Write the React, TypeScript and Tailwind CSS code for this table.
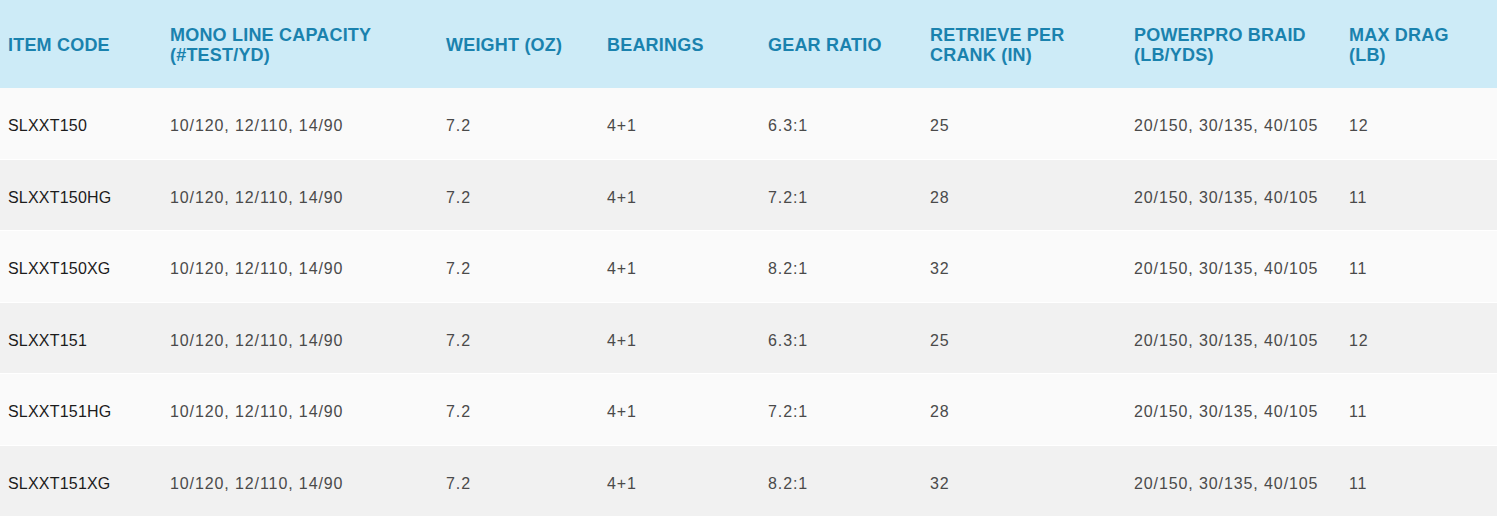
const headers = [
  ['ITEM CODE'],
  ['MONO LINE CAPACITY', '(#TEST/YD)'],
  ['WEIGHT (OZ)'],
  ['BEARINGS'],
  ['GEAR RATIO'],
  ['RETRIEVE PER', 'CRANK (IN)'],
  ['POWERPRO BRAID', '(LB/YDS)'],
  ['MAX DRAG', '(LB)'],
];

const rows = [
  ['SLXXT150', '6.3:1', '25', '12'],
  ['SLXXT150HG', '7.2:1', '28', '11'],
  ['SLXXT150XG', '8.2:1', '32', '11'],
  ['SLXXT151', '6.3:1', '25', '12'],
  ['SLXXT151HG', '7.2:1', '28', '11'],
  ['SLXXT151XG', '8.2:1', '32', '11'],
];

const cols = 'grid grid-cols-[162px_276px_161px_161px_162px_204px_215px_1fr] pl-[8px]';

export default function App() {
  return (
    <div className="w-[1500px] h-[517px] bg-white overflow-hidden" style={{ fontFamily: '"Liberation Sans", Arial, sans-serif' }}>
      <div className="w-[1497px]">
        <div className={`${cols} h-[88px] items-center bg-[#cdebf7] text-[#1a82ae] font-bold text-[18px] leading-[20px] tracking-[0.2px]`}>
          {headers.map((h, i) => (
            <div key={i} className="mt-[1px]">
              {h.map(line => <div key={line}>{line}</div>)}
            </div>
          ))}
        </div>
        {rows.map(([code, gear, retrieve, drag], i) => (
          <div
            key={code}
            className={`${cols} h-[71.5px] items-center pt-[6px] border-b border-white text-[16px] text-[#4a4a4a] tracking-[0.9px] ${i % 2 === 0 ? 'bg-[#fafafa]' : 'bg-[#f1f1f1]'}`}
          >
            <div className="text-[#1c1c1c] tracking-[0.2px]">{code}</div>
            <div>10/120, 12/110, 14/90</div>
            <div>7.2</div>
            <div>4+1</div>
            <div>{gear}</div>
            <div>{retrieve}</div>
            <div>20/150, 30/135, 40/105</div>
            <div>{drag}</div>
          </div>
        ))}
      </div>
    </div>
  );
}
